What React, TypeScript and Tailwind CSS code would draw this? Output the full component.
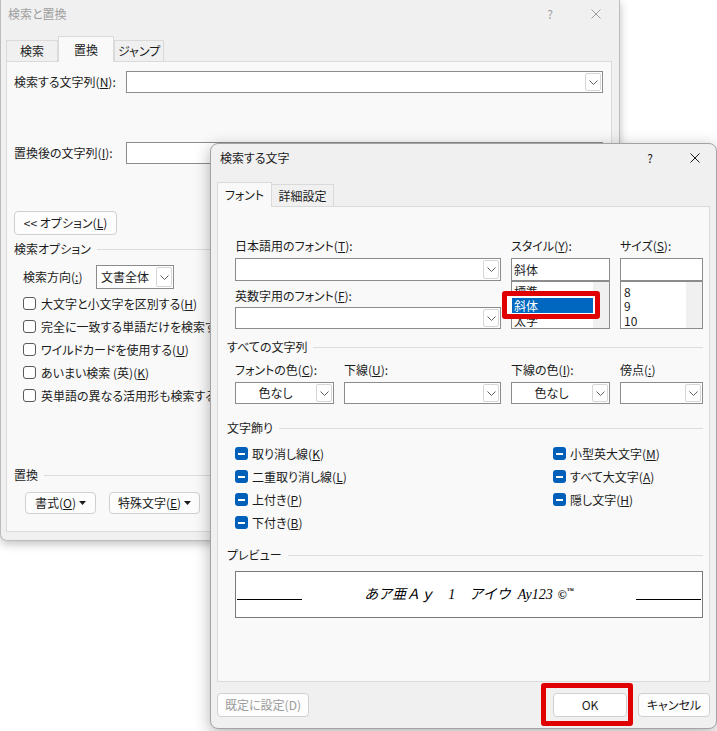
import type { ReactNode } from 'react';
import clsx from 'clsx';

const U = ({ children }: { children: ReactNode }) => (
  <span className="underline underline-offset-[1px]">{children}</span>
);

const Chevron = () => (
  <svg width="9" height="5" viewBox="0 0 9 5">
    <polyline points="0.5,0.5 4.5,4.5 8.5,0.5" fill="none" stroke="#606060" strokeWidth="1" />
  </svg>
);

const CloseIcon = ({ color }: { color: string }) => (
  <svg width="10" height="10" viewBox="0 0 10 10">
    <path d="M0.5 0.5L9.5 9.5M9.5 0.5L0.5 9.5" stroke={color} strokeWidth="1" />
  </svg>
);

const DropTri = () => (
  <svg width="7" height="4" viewBox="0 0 7 4" className="ml-[3px]">
    <polygon points="0,0 7,0 3.5,4" fill="#1b1b1b" />
  </svg>
);

function Combo({ w, h, text, center }: { w: string; h: string; text?: string; center?: boolean }) {
  return (
    <div className={clsx('flex border border-[#8c8c8c] bg-white', w, h)}>
      <div className={clsx('flex flex-1 items-center px-[4px] text-[12px]', center && 'justify-center')}>{text}</div>
      <div className="m-px flex w-[16px] items-center justify-center rounded-[2px] border border-[#d6d6d6] bg-white">
        <Chevron />
      </div>
    </div>
  );
}

function GroupHeader({ label, className }: { label: string; className?: string }) {
  return (
    <div className={clsx('flex h-[14px] items-center', className)}>
      <span>{label}</span>
      <div className="ml-[6px] h-px flex-1 bg-[#dcdcdc]" />
    </div>
  );
}

function Button({ w, children, className }: { w: string; children: ReactNode; className?: string }) {
  return (
    <div
      className={clsx(
        'flex h-full items-center justify-center rounded-[4px] border border-[#d0d0d0] bg-[#fdfdfd]',
        w,
        className
      )}
    >
      {children}
    </div>
  );
}

// 背景側: 検索と置換 (非アクティブ)
function ReplaceDialog() {
  const options = [
    <>大文字と小文字を区別する(<U>H</U>)</>,
    <>完全に一致する単語だけを検索する(<U>Y</U>)</>,
    <>ワイルドカードを使用する(<U>U</U>)</>,
    <>あいまい検索 (英)(<U>K</U>)</>,
    <>英単語の異なる活用形も検索する(<U>W</U>)</>,
  ];
  return (
    <div className="absolute left-0 top-0 h-[541px] w-[620px] overflow-hidden rounded-b-[7px] border border-t-0 border-[#bcbcbc] bg-[#f0f0f0] shadow-[0_3px_10px_rgba(0,0,0,0.25)]">
      <div className="flex h-[27px] items-center pl-[7px] text-[#9e9e9e]">
        <span className="flex-1">検索と置換</span>
        <span className="w-[8px] text-center">?</span>
        <div className="ml-[37px] mr-[18px]">
          <CloseIcon color="#9e9e9e" />
        </div>
      </div>

      <div className="mt-[9px] flex h-[25px] items-end pl-[5px]">
        <div className="flex h-[21px] w-[52px] items-center justify-center border border-b-0 border-[#dadada] bg-[#f0f0f0]">検索</div>
        <div className="relative z-10 -mb-px flex h-[26px] w-[56px] items-center justify-center border border-b-0 border-[#dadada] bg-[#f9f9f9]">置換</div>
        <div className="flex h-[21px] w-[50px] items-center justify-center border border-b-0 border-[#dadada] bg-[#f0f0f0]">ジャンプ</div>
      </div>

      <div className="ml-[5px] flex h-[471px] w-[606px] flex-col border border-[#dadada] bg-[#f9f9f9] pl-[7px]">
        <div className="mt-[9px] flex items-center">
          <span className="w-[112px]">検索する文字列(<U>N</U>):</span>
          <Combo w="w-[477px]" h="h-[22px]" />
        </div>
        <div className="mt-[49px] flex items-center">
          <span className="w-[112px]">置換後の文字列(<U>I</U>):</span>
          <Combo w="w-[477px]" h="h-[22px]" />
        </div>
        <div className="mt-[47px] h-[24px]">
          <Button w="w-[103px]">&lt;&lt; オプション(<U>L</U>)</Button>
        </div>
        <GroupHeader label="検索オプション" className="mt-[7px] mr-[6px]" />
        <div className="mt-[9px] flex items-center pl-[9px]">
          <span className="w-[73px]">検索方向(<U>:</U>)</span>
          <Combo w="w-[78px]" h="h-[24px]" text="文書全体" />
        </div>
        <div className="mt-[3px] flex flex-col pl-[9px]">
          {options.map((o, i) => (
            <div key={i} className="flex h-[23px] items-center gap-[5px] whitespace-nowrap">
              <div className="h-[13px] w-[13px] shrink-0 rounded-[3px] border border-[#5a5a5a] bg-white" />
              <span>{o}</span>
            </div>
          ))}
        </div>
        <GroupHeader label="置換" className="mt-[61px] mr-[6px]" />
        <div className="mt-[10px] flex h-[22px] gap-[13px] pl-[11px]">
          <Button w="w-[71px]">
            書式(<U>O</U>)<DropTri />
          </Button>
          <Button w="w-[91px]">
            特殊文字(<U>E</U>)<DropTri />
          </Button>
        </div>
      </div>
    </div>
  );
}

function Check({ children }: { children: ReactNode }) {
  return (
    <div className="flex h-[23px] items-center gap-[4px] whitespace-nowrap">
      <div className="flex h-[13px] w-[13px] items-center justify-center rounded-[3px] bg-[#005fb8]">
        <div className="h-[2px] w-[7px] bg-white" />
      </div>
      <span>{children}</span>
    </div>
  );
}

function ListBox({ w, items, pl }: { w: string; items: string[]; pl: string }) {
  return (
    <div className={clsx('flex h-[48px] border border-[#8c8c8c] bg-white', w)}>
      <div className={clsx('flex flex-1 flex-col pt-[3px]', pl)}>
        {items.map((it) => (
          <div key={it} className="flex h-[14.5px] items-center">
            {it}
          </div>
        ))}
      </div>
      <div className="w-[16px] bg-[#f0f0f0]" />
    </div>
  );
}

// 前面: 検索する文字
function FontDialog() {
  return (
    <div className="absolute left-[210px] top-[143px] flex h-[586px] w-[507px] flex-col rounded-[8px] border border-[#a3a3a3] bg-[#f0f0f0] shadow-[0_4px_16px_rgba(0,0,0,0.3)]">
      <div className="flex h-[27px] items-center pl-[9px]">
        <span className="flex-1">検索する文字</span>
        <span className="w-[8px] text-center">?</span>
        <div className="ml-[36px] mr-[16px]">
          <CloseIcon color="#1b1b1b" />
        </div>
      </div>

      <div className="mt-[11px] flex h-[24px] items-end pl-[6px]">
        <div className="relative z-10 -mb-px flex h-[25px] w-[55px] items-center justify-center border border-b-0 border-[#dadada] bg-[#f9f9f9]">フォント</div>
        <div className="flex h-[22px] w-[62px] items-center justify-center border border-b-0 border-l-0 border-[#dadada] bg-[#f0f0f0]">詳細設定</div>
      </div>

      <div className="ml-[6px] flex h-[476px] w-[493px] flex-col border border-[#dadada] bg-[#f9f9f9] pl-[17px] pt-[32px]">
        <div className="flex gap-[10px]">
          <div className="flex w-[266px] flex-col">
            <span className="h-[14px]">日本語用のフォント(<U>T</U>):</span>
            <div className="mt-[5px]">
              <Combo w="w-[266px]" h="h-[23px]" />
            </div>
            <span className="mt-[8px] h-[14px]">英数字用のフォント(<U>F</U>):</span>
            <div className="mt-[4px]">
              <Combo w="w-[266px]" h="h-[22px]" />
            </div>
          </div>
          <div className="flex w-[99px] flex-col">
            <span className="h-[14px]">スタイル(<U>Y</U>):</span>
            <div className="mt-[5px] flex h-[23px] items-center border border-[#8c8c8c] bg-white pl-[2px]">斜体</div>
            <ListBox w="w-[99px]" items={['標準', '斜体', '太字']} pl="pl-[2px]" />
          </div>
          <div className="flex w-[83px] flex-col">
            <span className="h-[14px]">サイズ(<U>S</U>):</span>
            <div className="mt-[5px] h-[23px] border border-[#8c8c8c] bg-white" />
            <ListBox w="w-[83px]" items={['8', '9', '10']} pl="pl-[3px]" />
          </div>
        </div>

        <GroupHeader label="すべての文字列" className="mt-[11px] -ml-[8px] mr-[6px]" />
        <div className="mt-[9px] flex h-[14px] gap-[10px]">
          <span className="w-[99px]">フォントの色(<U>C</U>):</span>
          <span className="w-[157px]">下線(<U>U</U>):</span>
          <span className="w-[99px]">下線の色(<U>I</U>):</span>
          <span className="w-[83px]">傍点(<U>:</U>)</span>
        </div>
        <div className="mt-[5px] flex gap-[10px]">
          <Combo w="w-[99px]" h="h-[22px]" text="色なし" center />
          <Combo w="w-[157px]" h="h-[22px]" />
          <Combo w="w-[99px]" h="h-[22px]" text="色なし" center />
          <Combo w="w-[83px]" h="h-[22px]" />
        </div>

        <GroupHeader label="文字飾り" className="mt-[17px] -ml-[8px] mr-[6px]" />
        <div className="mt-[7px] flex">
          <div className="flex w-[318px] flex-col">
            <Check>取り消し線(<U>K</U>)</Check>
            <Check>二重取り消し線(<U>L</U>)</Check>
            <Check>上付き(<U>P</U>)</Check>
            <Check>下付き(<U>B</U>)</Check>
          </div>
          <div className="flex flex-col">
            <Check>小型英大文字(<U>M</U>)</Check>
            <Check>すべて大文字(<U>A</U>)</Check>
            <Check>隠し文字(<U>H</U>)</Check>
          </div>
        </div>

        <GroupHeader label="プレビュー" className="mt-[14px] -ml-[8px] mr-[6px]" />
        <div className="mt-[9px] flex h-[47px] w-[468px] items-center border border-[#7a7a7a] bg-white px-px">
          <div className="mt-[9px] h-px w-[65px] bg-black" />
          <div className="flex flex-1 items-center justify-center whitespace-pre font-['Liberation_Serif','Noto_Sans_CJK_JP',serif] text-[14px] italic text-black [font-feature-settings:normal]">
            あア亜Ａｙ　1　アイウ<span className="ml-[7px]">Ay123</span>
            <b className="ml-[5px] text-[12px]">©</b>
            <span className="relative -top-[4px] text-[7px] font-bold">™</span>
          </div>
          <div className="mt-[9px] h-px w-[65px] bg-black" />
        </div>
      </div>

      <div className="mt-[11px] flex h-[24px] items-stretch justify-between px-[6px]">
        <Button w="w-[92px]" className="text-[#9b9b9b]">
          既定に設定(D)
        </Button>
        <div className="flex gap-[11px]">
          <Button w="w-[74px]" className="border-[#2b78c4] bg-white">
            OK
          </Button>
          <Button w="w-[72px]">キャンセル</Button>
        </div>
      </div>
    </div>
  );
}

export default function App() {
  return (
    <div className="relative h-[731px] w-[717px] overflow-hidden bg-white font-['Noto_Sans_CJK_JP',sans-serif] text-[12px] leading-[14px] text-[#1b1b1b] [font-feature-settings:'palt']">
      <ReplaceDialog />
      <FontDialog />

      {/* 注釈: 赤枠 */}
      <div className="absolute left-[502px] top-[291px] h-[28px] w-[98px] rounded-[3px] border-[5px] border-[#e00000] bg-white pl-[5px] pt-[2px]">
        <div className="flex h-[15px] w-[81px] items-center bg-[#0067c0] pl-[2px] text-white">斜体</div>
      </div>
      <div className="absolute left-[541px] top-[683px] h-[43px] w-[92px] rounded-[3px] border-[5px] border-[#e00000]" />
    </div>
  );
}
